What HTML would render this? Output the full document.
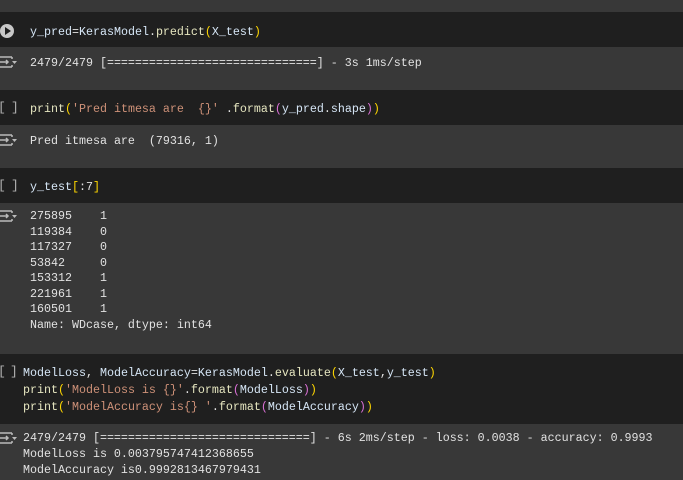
<!DOCTYPE html>
<html><head><meta charset="utf-8"><style>
body{margin:0;width:683px;height:480px;background:#383838;overflow:hidden;position:relative;font-family:"Liberation Mono",monospace;font-size:11.67px;color:#e2e2e2}
.cell{position:absolute;left:0;width:683px;background:#1f1f1f}
.t{position:absolute;white-space:pre;line-height:16px}
.v{color:#d6e6f6}.f{color:#e6e6c0}.y{color:#ffd700}.m{color:#da70d6}.s{color:#ce9178}
.br{position:absolute;color:#b0b0b0;font-size:13px;line-height:16px}
</style></head><body>
<div class="cell" style="top:12px;height:35px"></div>
<div class="cell" style="top:90px;height:35px"></div>
<div class="cell" style="top:168px;height:35px"></div>
<div class="cell" style="top:354px;height:70px"></div>

<svg style="position:absolute;left:0;top:22px" width="16" height="18"><circle cx="7" cy="9" r="7" fill="#c8c8c8"/><path d="M5 5L11 9L5 13Z" fill="#1f1f1f"/></svg>
<svg style="position:absolute;left:0;top:55px" width="18" height="14"><path d="M0 2H12M0 12H12M12 2V4M12 12V10M0 7H8M6 5L8 7L6 9" stroke="#bbb" stroke-width="1.5" fill="none"/><path d="M12 6H17L14.5 9Z" fill="#bbb"/></svg>
<svg style="position:absolute;left:0;top:133px" width="18" height="14"><path d="M0 2H12M0 12H12M12 2V4M12 12V10M0 7H8M6 5L8 7L6 9" stroke="#bbb" stroke-width="1.5" fill="none"/><path d="M12 6H17L14.5 9Z" fill="#bbb"/></svg>
<svg style="position:absolute;left:0;top:209px" width="18" height="14"><path d="M0 2H12M0 12H12M12 2V4M12 12V10M0 7H8M6 5L8 7L6 9" stroke="#bbb" stroke-width="1.5" fill="none"/><path d="M12 6H17L14.5 9Z" fill="#bbb"/></svg>
<svg style="position:absolute;left:0;top:431px" width="18" height="14"><path d="M0 2H12M0 12H12M12 2V4M12 12V10M0 7H8M6 5L8 7L6 9" stroke="#bbb" stroke-width="1.5" fill="none"/><path d="M12 6H17L14.5 9Z" fill="#bbb"/></svg>
<div class="br" style="left:-2px;top:100px">[</div><div class="br" style="left:11px;top:100px">]</div>
<div class="br" style="left:-2px;top:178px">[</div><div class="br" style="left:11px;top:178px">]</div>
<div class="br" style="left:-2px;top:364px">[</div><div class="br" style="left:10px;top:364px">]</div>

<div class="t" style="left:30px;top:24px"><span class="v">y_pred</span>=<span class="v">KerasModel</span>.<span class="f">predict</span><span class="y">(</span><span class="v">X_test</span><span class="y">)</span></div>
<div class="t" style="left:30px;top:55px">2479/2479 [==============================] - 3s 1ms/step</div>
<div class="t" style="left:30px;top:101px"><span class="f">print</span><span class="y">(</span><span class="s">'Pred itmesa are  {}'</span> .<span class="f">format</span><span class="m">(</span><span class="v">y_pred</span>.<span class="v">shape</span><span class="m">)</span><span class="y">)</span></div>
<div class="t" style="left:30px;top:133px">Pred itmesa are  (79316, 1)</div>
<div class="t" style="left:30px;top:179px"><span class="v">y_test</span><span class="y">[</span>:7<span class="y">]</span></div>
<div class="t" style="left:30px;top:209px;line-height:15.5px">275895    1
119384    0
117327    0
53842     0
153312    1
221961    1
160501    1
Name: WDcase, dtype: int64</div>
<div class="t" style="left:23px;top:365px;line-height:17px"><span class="v">ModelLoss</span>, <span class="v">ModelAccuracy</span>=<span class="v">KerasModel</span>.<span class="f">evaluate</span><span class="y">(</span><span class="v">X_test</span>,<span class="v">y_test</span><span class="y">)</span>
<span class="f">print</span><span class="y">(</span><span class="s">'ModelLoss is {}'</span>.<span class="f">format</span><span class="m">(</span><span class="v">ModelLoss</span><span class="m">)</span><span class="y">)</span>
<span class="f">print</span><span class="y">(</span><span class="s">'ModelAccuracy is{} '</span>.<span class="f">format</span><span class="m">(</span><span class="v">ModelAccuracy</span><span class="m">)</span><span class="y">)</span></div>
<div class="t" style="left:23px;top:430px">2479/2479 [==============================] - 6s 2ms/step - loss: 0.0038 - accuracy: 0.9993
ModelLoss is 0.003795747412368655
ModelAccuracy is0.9992813467979431</div>
</body></html>
